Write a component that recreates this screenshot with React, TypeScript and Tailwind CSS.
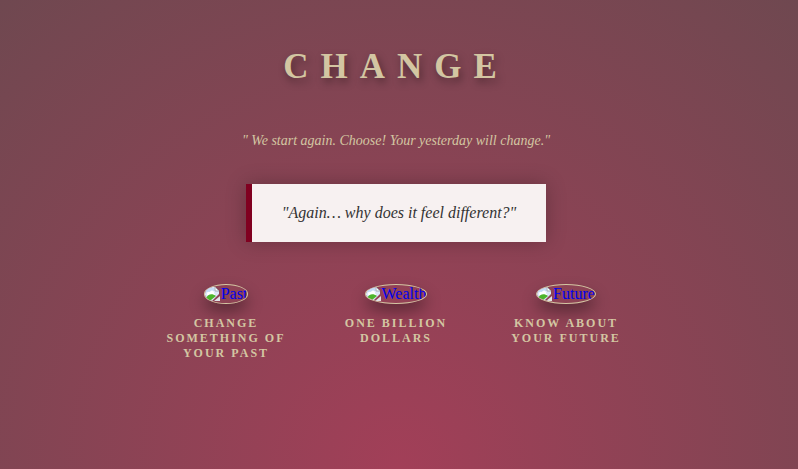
type Choice = { alt: string; caption: string; href: string };

const CHOICES: Choice[] = [
  { alt: "Past",   caption: "Change something of your past", href: "#past"   },
  { alt: "Wealth", caption: "One billion dollars",           href: "#wealth" },
  { alt: "Future", caption: "Know about your future",        href: "#future" },
];

export default function App() {
  return (
    <div className="min-h-screen bg-[radial-gradient(circle_at_bottom,#a23f58,#6f4850)] font-['Liberation_Serif','Times_New_Roman',serif]">
      <main className="flex flex-col items-center pt-[46px] pr-1.5 text-center">
        <h1 className="text-[35px] leading-[42px] font-bold tracking-[12px] text-[#d3c6a2] [text-shadow:2px_4px_8px_rgba(0,0,0,0.4)]">
          CHANGE
        </h1>

        <p className="mt-[44px] text-[14px] leading-[18px] italic text-[#d3c6a2]">
          " We start again. Choose! Your yesterday will change."
        </p>

        <blockquote className="mt-[34px] border-l-6 border-[#800020] bg-[#f7f1f1] px-[30px] py-5 text-base leading-[18px] italic text-[#333] shadow-[0_0_20px_rgba(0,0,0,0.25)]">
          "Again… why does it feel different?"
        </blockquote>

        <nav className="mt-[42px] flex items-start justify-center gap-[50px]">
          {CHOICES.map((choice) => <ChoiceLink key={choice.href} {...choice} />)}
        </nav>
      </main>
    </div>
  );
}

function ChoiceLink({ alt, caption, href }: Choice) {
  return (
    <a href={href} className="flex w-[120px] flex-col items-center">
      <span className="flex h-5 items-center overflow-hidden rounded-[50%] border border-[#d3c6a2] text-base leading-[18px] text-[#0000ee] shadow-[0_8px_15px_rgba(0,0,0,0.35)]">
        <PictureIcon />
        {alt}
      </span>
      <span className="mt-3 text-[12px] leading-[15px] font-bold tracking-[2px] text-[#d3c6a2] uppercase">
        {caption}
      </span>
    </a>
  );
}

// Torn picture placeholder
function PictureIcon() {
  return (
    <svg width="16" height="16" viewBox="0 0 16 16" className="shrink-0" aria-hidden="true">
      <path d="M0 1h10l4 4v3L7 15H0z" fill="#dce8f8" />
      <path d="M1 2h8v4H1z" fill="#c3dbf7" />
      <path d="M2 8a2 2 0 0 1 3-2 2 2 0 0 1 4 1l1 2H2z" fill="#fff" />
      <path d="M1 14v-2c2-4 6-5 10-2l-5 4z" fill="#4cb52c" />
      <path d="M10 1v4h4z" fill="#fff" stroke="#a4abb3" strokeWidth="1" />
      <path d="M15 10v5H9z" fill="#dfe3e8" />
    </svg>
  );
}
